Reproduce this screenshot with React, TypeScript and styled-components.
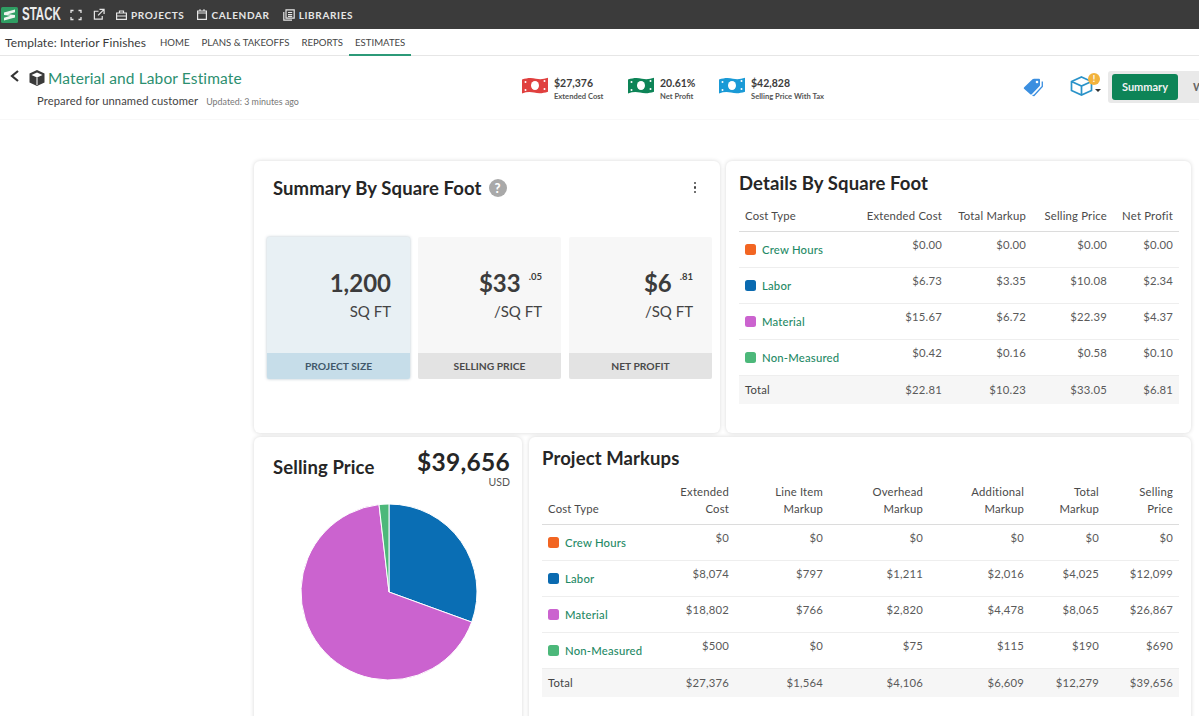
import React from "react";
import styled, { createGlobalStyle } from "styled-components";

const Global = createGlobalStyle`
  html, body { margin: 0; padding: 0; background: #fff; }
  body { font-family: Lato, "Open Sans", "Liberation Sans", sans-serif; color: #3c3c3c; }
  * { box-sizing: border-box; }
`;

const Page = styled.div`
  width: 1199px;
  height: 716px;
  overflow: hidden;
  display: flex;
  flex-direction: column;
  background: #fff;
`;
const TopBar = styled.header`
  height: 29px;
  flex: none;
  background: #3b3b3b;
  display: flex;
  align-items: center;
  padding-left: 1px;
`;
const Brand = styled.div`
  display: flex;
  align-items: center;
  gap: 4px;
  width: 69px;
  flex: none;
  svg { flex: none; }
`;
const BrandWord = styled.span`
  font-family: "Liberation Sans", sans-serif;
  font-weight: 700;
  font-size: 18px;
  color: #ececec;
  transform: scaleX(0.64);
  transform-origin: left center;
`;
const TopIcon = styled.span`
  display: inline-flex;
  width: 12px;
  margin-right: ${(p: { $mr: number }) => p.$mr}px;
`;
const TopLink = styled.a`
  display: inline-flex;
  align-items: center;
  gap: 4px;
  color: #e6e6e6;
  font-size: 10px;
  font-weight: 700;
  letter-spacing: 0.65px;
  margin-right: 13px;
`;
const SubNav = styled.nav`
  height: 27px;
  flex: none;
  display: flex;
  align-items: stretch;
  border-bottom: 1px solid #e6e6e6;
  padding-left: 5px;
  font-size: 9.6px;
`;
const TemplateName = styled.span`
  font-size: 12px;
  line-height: 28px;
  color: #3a3a3a;
  width: 149px;
  letter-spacing: 0.1px;
`;
const SubLink = styled.a<{ $active?: boolean }>`
  color: #444;
  line-height: 28px;
  padding: 0 6px;
  height: 27px;
  border-bottom: 2px solid ${(p) => (p.$active ? "#2c9a78" : "transparent")};
`;
const EstimateBar = styled.section`
  height: 64px;
  flex: none;
  display: flex;
  border-bottom: 1px solid #f8f8f8;
  position: relative;
`;
const TitleBlock = styled.div`
  width: 521px;
  flex: none;
  padding: 11px 0 0 9px;
`;
const TitleRow = styled.div`
  display: flex;
  align-items: center;
  height: 22px;
`;
const Title = styled.h1`
  margin: 0 0 0 2px;
  font-size: 15.5px;
  font-weight: 400;
  color: #2c8f70;
  letter-spacing: 0.12px;
`;
const MetaRow = styled.div`
  display: flex;
  align-items: baseline;
  gap: 8px;
  padding: 5px 0 0 28px;
`;
const Prepared = styled.span`
  font-size: 11.2px;
  color: #444;
  letter-spacing: 0.1px;
`;
const Updated = styled.span`
  font-size: 8.9px;
  color: #777;
`;
const Kpis = styled.div`
  display: flex;
  padding-top: 20px;
  width: 446px;
  flex: none;
`;
const Kpi = styled.div<{ $w: number }>`
  width: ${(p) => p.$w}px;
  display: flex;
  gap: 5px;
`;
const KpiText = styled.div`
  display: flex;
  flex-direction: column;
  padding-top: 1px;
`;
const KpiValue = styled.span`
  font-size: 10.5px;
  font-weight: 700;
  line-height: 13px;
  color: #3c3c3c;
`;
const KpiLabel = styled.span`
  font-size: 7.6px;
  font-weight: 700;
  line-height: 12px;
  color: #555;
`;
const RightTools = styled.div`
  display: flex;
  align-items: flex-start;
  padding-top: 17px;
  flex: 1;
  min-width: 0;
`;
const TagIcon = styled.svg`
  margin: 5px 0 0 56px;
  flex: none;
`;
const CubeWrap = styled.span`
  position: relative;
  display: inline-flex;
  margin: 3px 2px 0 25px;
`;
const Badge = styled.span`
  position: absolute;
  left: 18px;
  top: -3px;
  width: 12px;
  height: 12px;
  border-radius: 50%;
  background: #f2b33d;
  color: #fff;
  font-size: 9px;
  font-weight: 700;
  line-height: 12px;
  text-align: center;
`;
const Caret = styled.span`
  width: 0;
  height: 0;
  margin: 16px 7px 0 0;
  border: 3px solid transparent;
  border-top: 3px solid #333;
`;
const Toggle = styled.div`
  flex: 1;
  height: 32px;
  margin-top: -2px;
  background: #e9e9e9;
  border-radius: 3px 0 0 3px;
  padding: 3px 0 0 4px;
  display: flex;
  overflow: hidden;
`;
const ToggleOn = styled.span`
  width: 66px;
  height: 26px;
  background: #0d8457;
  color: #f2f2f2;
  border-radius: 3px;
  font-size: 11px;
  font-weight: 700;
  line-height: 26px;
  text-align: center;
  flex: none;
`;
const ToggleOff = styled.span`
  margin-left: 15px;
  font-size: 11px;
  font-weight: 700;
  line-height: 26px;
  color: #666;
`;
const Dashboard = styled.main`
  flex: none;
  padding: 41px 8px 0 254px;
  display: grid;
  grid-template-columns: 268px 198px 471px;
  grid-template-rows: 272px 300px;
  column-gap: 0;
  row-gap: 4px;
`;
const Card = styled.div`
  background: #fff;
  border-radius: 6px;
  box-shadow: 0 0 4px rgba(0, 0, 0, 0.16);
`;
const SummaryCard = styled(Card)`
  grid-column: 1 / 3;
  padding: 15px 8px 0 13px;
`;
const DetailsCard = styled(Card)`
  margin-left: 6px;
  padding: 12px 12px 0 13px;
`;
const PriceCard = styled(Card)`
  padding: 10px 12px 0 19px;
`;
const MarkupsCard = styled(Card)`
  grid-column: 2 / 4;
  margin-left: 7px;
  padding: 11px 12px 0 13px;
`;
const CardHeadRow = styled.div`
  display: flex;
  align-items: center;
  padding-left: 6px;
  height: 23px;
`;
const CardTitle = styled.h2`
  margin: 0;
  font-size: 18.5px;
  line-height: 20px;
  font-weight: 700;
  color: #262626;
  letter-spacing: 0.1px;
`;
const Help = styled.span`
  width: 18px;
  height: 18px;
  border-radius: 50%;
  background: #a9a9a9;
  color: #fff;
  margin-left: 7px;
  font-size: 13px;
  font-weight: 900;
  line-height: 18px;
  text-align: center;
`;
const Dots = styled.span`
  margin-left: auto;
  margin-right: 16px;
  display: flex;
  flex-direction: column;
  gap: 2px;
  i { width: 2.5px; height: 2.5px; border-radius: 50%; background: #444; display: block; }
`;
const Tiles = styled.div`
  display: flex;
  gap: 8px;
  margin-top: 38px;
`;
const Tile = styled.div<{ $on?: boolean }>`
  width: 143px;
  height: 142px;
  display: flex;
  flex-direction: column;
  border-radius: 2px;
  overflow: hidden;
  background: ${(p) => (p.$on ? "#e8f0f4" : "#f7f7f7")};
  box-shadow: ${(p) => (p.$on ? "0 0 3px rgba(90,120,140,.45)" : "none")};
`;
const TileBody = styled.div`
  flex: 1;
  display: flex;
  flex-direction: column;
  align-items: flex-end;
  padding: 31px 19px 0 0;
`;
const TileNum = styled.div`
  font-size: 24px;
  font-weight: 700;
  line-height: 29px;
  color: #3c3c3c;
  display: flex;
  align-items: flex-start;
`;
const Cents = styled.sup`
  font-size: 9.5px;
  font-weight: 700;
  line-height: 12px;
  margin: 3px 0 0 8px;
  vertical-align: baseline;
`;
const TileUnit = styled.div`
  font-size: 15px;
  line-height: 18px;
  margin-top: 5px;
  color: #444;
`;
const TileFoot = styled.div<{ $on?: boolean }>`
  height: 26px;
  background: ${(p) => (p.$on ? "#c6dde9" : "#e3e3e3")};
  color: ${(p) => (p.$on ? "#41586a" : "#4a4a4a")};
  font-size: 10.3px;
  font-weight: 700;
  line-height: 26px;
  text-align: center;
`;
const Table = styled.table<{ $mt: number }>`
  border-collapse: collapse;
  width: 100%;
  margin-top: ${(p) => p.$mt}px;
  table-layout: fixed;
  font-size: 11.3px;
  letter-spacing: 0.2px;
`;
const Th = styled.th`
  font-weight: 400;
  color: #4a4a4a;
  text-align: right;
  padding: 0 6px 7px 0;
  border-bottom: 1px solid #dcdcdc;
  line-height: 17px;
  vertical-align: bottom;
  &:first-child { text-align: left; padding-left: 6px; }
`;
const Td = styled.td`
  color: #5a5a5a;
  text-align: right;
  padding: 6px 6px 0 0;
  height: 36px;
  vertical-align: top;
  line-height: 14px;
  border-bottom: 1px solid #eeeeee;
`;
const NameCell = styled.td`
  height: 36px;
  padding-left: 6px;
  border-bottom: 1px solid #eeeeee;
  vertical-align: middle;
`;
const TypeName = styled.span`
  display: flex;
  align-items: center;
  gap: 6px;
  color: #1f8a66;
  font-weight: 500;
`;
const Swatch = styled.i<{ $c: string }>`
  width: 11px;
  height: 11px;
  flex: none;
  border-radius: 2.5px;
  background: ${(p) => p.$c};
  display: block;
`;
const TotalRow = styled.tr`
  background: #f6f6f6;
  td { border-bottom: 0; height: 28px; vertical-align: middle; padding-top: 0; }
`;
const TotalName = styled.td`
  padding-left: 6px;
  color: #444;
`;
const PriceHead = styled.div`
  display: flex;
  justify-content: space-between;
  align-items: flex-start;
`;
const PriceTitle = styled(CardTitle)`
  margin-top: 10px;
`;
const PriceTotal = styled.div`
  text-align: right;
`;
const PriceValue = styled.div`
  font-size: 24.5px;
  font-weight: 700;
  line-height: 29px;
  color: #262626;
  letter-spacing: 0.3px;
`;
const PriceUnit = styled.div`
  font-size: 10.5px;
  line-height: 12px;
  color: #555;
`;
const PieBox = styled.div`
  margin: 14px 0 0 26px;
`;

const Money = ({ c }: { c: string }) => (
  <svg width="28" height="19" viewBox="0 0 28 19">
    <path d="M1 3.500c5-1.500 9-2 14-.8 4 .9 8 .5 12-1v14c-5 1.600-9 2-14 .8-4-.9-8-.6-12 1z" fill={c} />
    <ellipse cx="14" cy="9.500" rx="4" ry="4.500" fill="#fff" />
    <circle cx="4.500" cy="6" r="1" fill="#fff" />
    <circle cx="23.500" cy="5" r="1" fill="#fff" />
    <circle cx="4.500" cy="14" r="1" fill="#fff" />
    <circle cx="23.500" cy="13" r="1" fill="#fff" />
  </svg>
);

const Logo = () => (
  <svg width="17" height="16" viewBox="0 0 17 16">
    <rect width="17" height="16" rx="1.500" fill="#2f9e63" />
    <path d="M3 5.500 14 2.500v2.800L7 7.200 14 8v2.500L3 13.500v-2.800l6.500-1.900L3 8z" fill="#eef5ef" />
  </svg>
);

const rows1 = [
  ["Crew Hours", "#f26522", "$0.00", "$0.00", "$0.00", "$0.00"],
  ["Labor", "#0a6ab0", "$6.73", "$3.35", "$10.08", "$2.34"],
  ["Material", "#cb63cf", "$15.67", "$6.72", "$22.39", "$4.37"],
  ["Non-Measured", "#4cb87a", "$0.42", "$0.16", "$0.58", "$0.10"],
];
const rows2 = [
  ["Crew Hours", "#f26522", "$0", "$0", "$0", "$0", "$0", "$0"],
  ["Labor", "#0a6ab0", "$8,074", "$797", "$1,211", "$2,016", "$4,025", "$12,099"],
  ["Material", "#cb63cf", "$18,802", "$766", "$2,820", "$4,478", "$8,065", "$26,867"],
  ["Non-Measured", "#4cb87a", "$500", "$0", "$75", "$115", "$190", "$690"],
];

const polar = (deg: number, r = 88) => {
  const a = ((deg - 90) * Math.PI) / 180;
  return `${90 + r * Math.cos(a)} ${90 + r * Math.sin(a)}`;
};
const wedge = (from: number, to: number) =>
  `M90 90L${polar(from)}A88 88 0 ${to - from > 180 ? 1 : 0} 1 ${polar(to)}Z`;

const DataRow = ({ r }: { r: string[] }) => (
  <tr>
    <NameCell>
      <TypeName>
        <Swatch $c={r[1]} />
        {r[0]}
      </TypeName>
    </NameCell>
    {r.slice(2).map((v, i) => (
      <Td key={i}>{v}</Td>
    ))}
  </tr>
);

export default function App() {
  return (
    <Page>
      <Global />
      <TopBar>
        <Brand>
          <Logo />
          <BrandWord>STACK</BrandWord>
        </Brand>
        <TopIcon $mr={11}>
          <svg width="12" height="12" viewBox="0 0 12 12" fill="none" stroke="#e6e6e6" strokeWidth="1.3">
            <path d="M1 4V1.500h2.500M8.500 1.500H11V4M11 8v2.500H8.500M3.500 10.500H1V8" />
          </svg>
        </TopIcon>
        <TopIcon $mr={11}>
          <svg width="13" height="13" viewBox="0 0 13 13" fill="none" stroke="#e6e6e6" strokeWidth="1.3">
            <path d="M10 8v3.500H1.500V3H6M7 1h5v5M12 1 5.500 7.500" />
          </svg>
        </TopIcon>
        <TopLink>
          <svg width="11" height="10" viewBox="0 0 11 10" fill="none" stroke="#e6e6e6" strokeWidth="1.2">
            <path d="M.6 3h9.800v6.400H.6zM3.500 3V1h4v2M.6 6h9.800" />
          </svg>
          PROJECTS
        </TopLink>
        <TopLink>
          <svg width="10" height="11" viewBox="0 0 10 11" fill="none" stroke="#e6e6e6" strokeWidth="1.2">
            <path d="M.6 2h8.800v8.400H.6zM.6 4h8.800M3 .3V2M7 .3V2" />
          </svg>
          CALENDAR
        </TopLink>
        <TopLink>
          <svg width="12" height="12" viewBox="0 0 12 12" fill="none" stroke="#e6e6e6" strokeWidth="1.2">
            <path d="M3 .8h8.200v8.400H3zM.8 3v8.200H9M5 3.500h4.200M5 5.500h4.200M5 7.300h4.200" />
          </svg>
          LIBRARIES
        </TopLink>
      </TopBar>
      <SubNav>
        <TemplateName>Template: Interior Finishes</TemplateName>
        <SubLink>HOME</SubLink>
        <SubLink>PLANS &amp; TAKEOFFS</SubLink>
        <SubLink>REPORTS</SubLink>
        <SubLink $active>ESTIMATES</SubLink>
      </SubNav>
      <EstimateBar>
        <TitleBlock>
          <TitleRow>
            <svg width="12" height="14" viewBox="0 0 12 14" fill="none" stroke="#333" strokeWidth="2.2" style={{ marginTop: -4 }}>
              <path d="M9 2 3 7l6 5" />
            </svg>
            <svg width="18" height="18" viewBox="0 0 18 18" style={{ marginLeft: 7 }}>
              <path d="M9 1 16.500 4.500v9L9 17l-7.500-3.500v-9z" fill="#3a3a3a" />
              <path d="M3.500 6 9 8.500 14.500 6 9 3.500z" fill="#fff" />
              <path d="M9 8.500V16" stroke="#fff" strokeWidth="1" />
            </svg>
            <Title>Material and Labor Estimate</Title>
          </TitleRow>
          <MetaRow>
            <Prepared>Prepared for unnamed customer</Prepared>
            <Updated>Updated: 3 minutes ago</Updated>
          </MetaRow>
        </TitleBlock>
        <Kpis>
          <Kpi $w={106}>
            <Money c="#e0403f" />
            <KpiText>
              <KpiValue>$27,376</KpiValue>
              <KpiLabel>Extended Cost</KpiLabel>
            </KpiText>
          </Kpi>
          <Kpi $w={91}>
            <Money c="#0d8457" />
            <KpiText>
              <KpiValue>20.61%</KpiValue>
              <KpiLabel>Net Profit</KpiLabel>
            </KpiText>
          </Kpi>
          <Kpi $w={180}>
            <Money c="#1a9ad6" />
            <KpiText>
              <KpiValue>$42,828</KpiValue>
              <KpiLabel>Selling Price With Tax</KpiLabel>
            </KpiText>
          </Kpi>
        </Kpis>
        <RightTools>
          <TagIcon width="22" height="20" viewBox="0 0 22 20">
            <path d="M1 10.800Q.3 10 1.200 9.200L9.500 1.200Q10 .7 11 .7h5q1 0 1 1v5q0 1-.6 1.600L9 16q-1 1-2 0z" fill="#3b8fe0" />
            <path d="M19.300 3.500v5L11 17.500l-1.500-.2" fill="none" stroke="#3b8fe0" strokeWidth="1.300" />
            <circle cx="14" cy="4" r="1.300" fill="#fff" />
          </TagIcon>
          <CubeWrap>
            <svg width="23" height="20" viewBox="0 0 23 20" fill="none" stroke="#2a93c9" strokeWidth="1.700">
              <path d="M11.500 1 21.500 5.500v9L11.500 19 1.500 14.500v-9zM1.500 5.500l10 4.500 10-4.500M11.500 10v9" />
            </svg>
            <Badge>!</Badge>
          </CubeWrap>
          <Caret />
          <Toggle>
            <ToggleOn>Summary</ToggleOn>
            <ToggleOff>Work</ToggleOff>
          </Toggle>
        </RightTools>
      </EstimateBar>
      <Dashboard>
        <SummaryCard>
          <CardHeadRow>
            <CardTitle>Summary By Square Foot</CardTitle>
            <Help>?</Help>
            <Dots>
              <i />
              <i />
              <i />
            </Dots>
          </CardHeadRow>
          <Tiles>
            <Tile $on>
              <TileBody>
                <TileNum>1,200</TileNum>
                <TileUnit>SQ FT</TileUnit>
              </TileBody>
              <TileFoot $on>PROJECT SIZE</TileFoot>
            </Tile>
            <Tile>
              <TileBody>
                <TileNum>
                  $33<Cents>.05</Cents>
                </TileNum>
                <TileUnit>/SQ FT</TileUnit>
              </TileBody>
              <TileFoot>SELLING PRICE</TileFoot>
            </Tile>
            <Tile>
              <TileBody>
                <TileNum>
                  $6<Cents>.81</Cents>
                </TileNum>
                <TileUnit>/SQ FT</TileUnit>
              </TileBody>
              <TileFoot>NET PROFIT</TileFoot>
            </Tile>
          </Tiles>
        </SummaryCard>
        <DetailsCard>
          <CardTitle>Details By Square Foot</CardTitle>
          <Table $mt={14}>
            <colgroup>
              <col width="116" />
              <col width="93" />
              <col width="84" />
              <col width="81" />
              <col width="66" />
            </colgroup>
            <thead>
              <tr>
                <Th>Cost Type</Th>
                <Th>Extended Cost</Th>
                <Th>Total Markup</Th>
                <Th>Selling Price</Th>
                <Th>Net Profit</Th>
              </tr>
            </thead>
            <tbody>
              {rows1.map((r) => (
                <DataRow key={r[0]} r={r} />
              ))}
              <TotalRow>
                <TotalName>Total</TotalName>
                <Td>$22.81</Td>
                <Td>$10.23</Td>
                <Td>$33.05</Td>
                <Td>$6.81</Td>
              </TotalRow>
            </tbody>
          </Table>
        </DetailsCard>
        <PriceCard>
          <PriceHead>
            <PriceTitle>Selling Price</PriceTitle>
            <PriceTotal>
              <PriceValue>$39,656</PriceValue>
              <PriceUnit>USD</PriceUnit>
            </PriceTotal>
          </PriceHead>
          <PieBox>
            <svg width="180" height="180" viewBox="0 0 180 180">
              <g stroke="#fff" strokeWidth="1">
                <path d={wedge(0, 110)} fill="#0a6eb4" />
                <path d={wedge(110, 353.5)} fill="#cb63cf" />
                <path d={wedge(353.5, 360)} fill="#4cb87a" />
              </g>
            </svg>
          </PieBox>
        </PriceCard>
        <MarkupsCard>
          <CardTitle>Project Markups</CardTitle>
          <Table $mt={15}>
            <colgroup>
              <col width="116" />
              <col width="77" />
              <col width="94" />
              <col width="100" />
              <col width="101" />
              <col width="75" />
              <col width="74" />
            </colgroup>
            <thead>
              <tr>
                <Th>Cost Type</Th>
                <Th>Extended<br />Cost</Th>
                <Th>Line Item<br />Markup</Th>
                <Th>Overhead<br />Markup</Th>
                <Th>Additional<br />Markup</Th>
                <Th>Total<br />Markup</Th>
                <Th>Selling<br />Price</Th>
              </tr>
            </thead>
            <tbody>
              {rows2.map((r) => (
                <DataRow key={r[0]} r={r} />
              ))}
              <TotalRow>
                <TotalName>Total</TotalName>
                <Td>$27,376</Td>
                <Td>$1,564</Td>
                <Td>$4,106</Td>
                <Td>$6,609</Td>
                <Td>$12,279</Td>
                <Td>$39,656</Td>
              </TotalRow>
            </tbody>
          </Table>
        </MarkupsCard>
      </Dashboard>
    </Page>
  );
}
